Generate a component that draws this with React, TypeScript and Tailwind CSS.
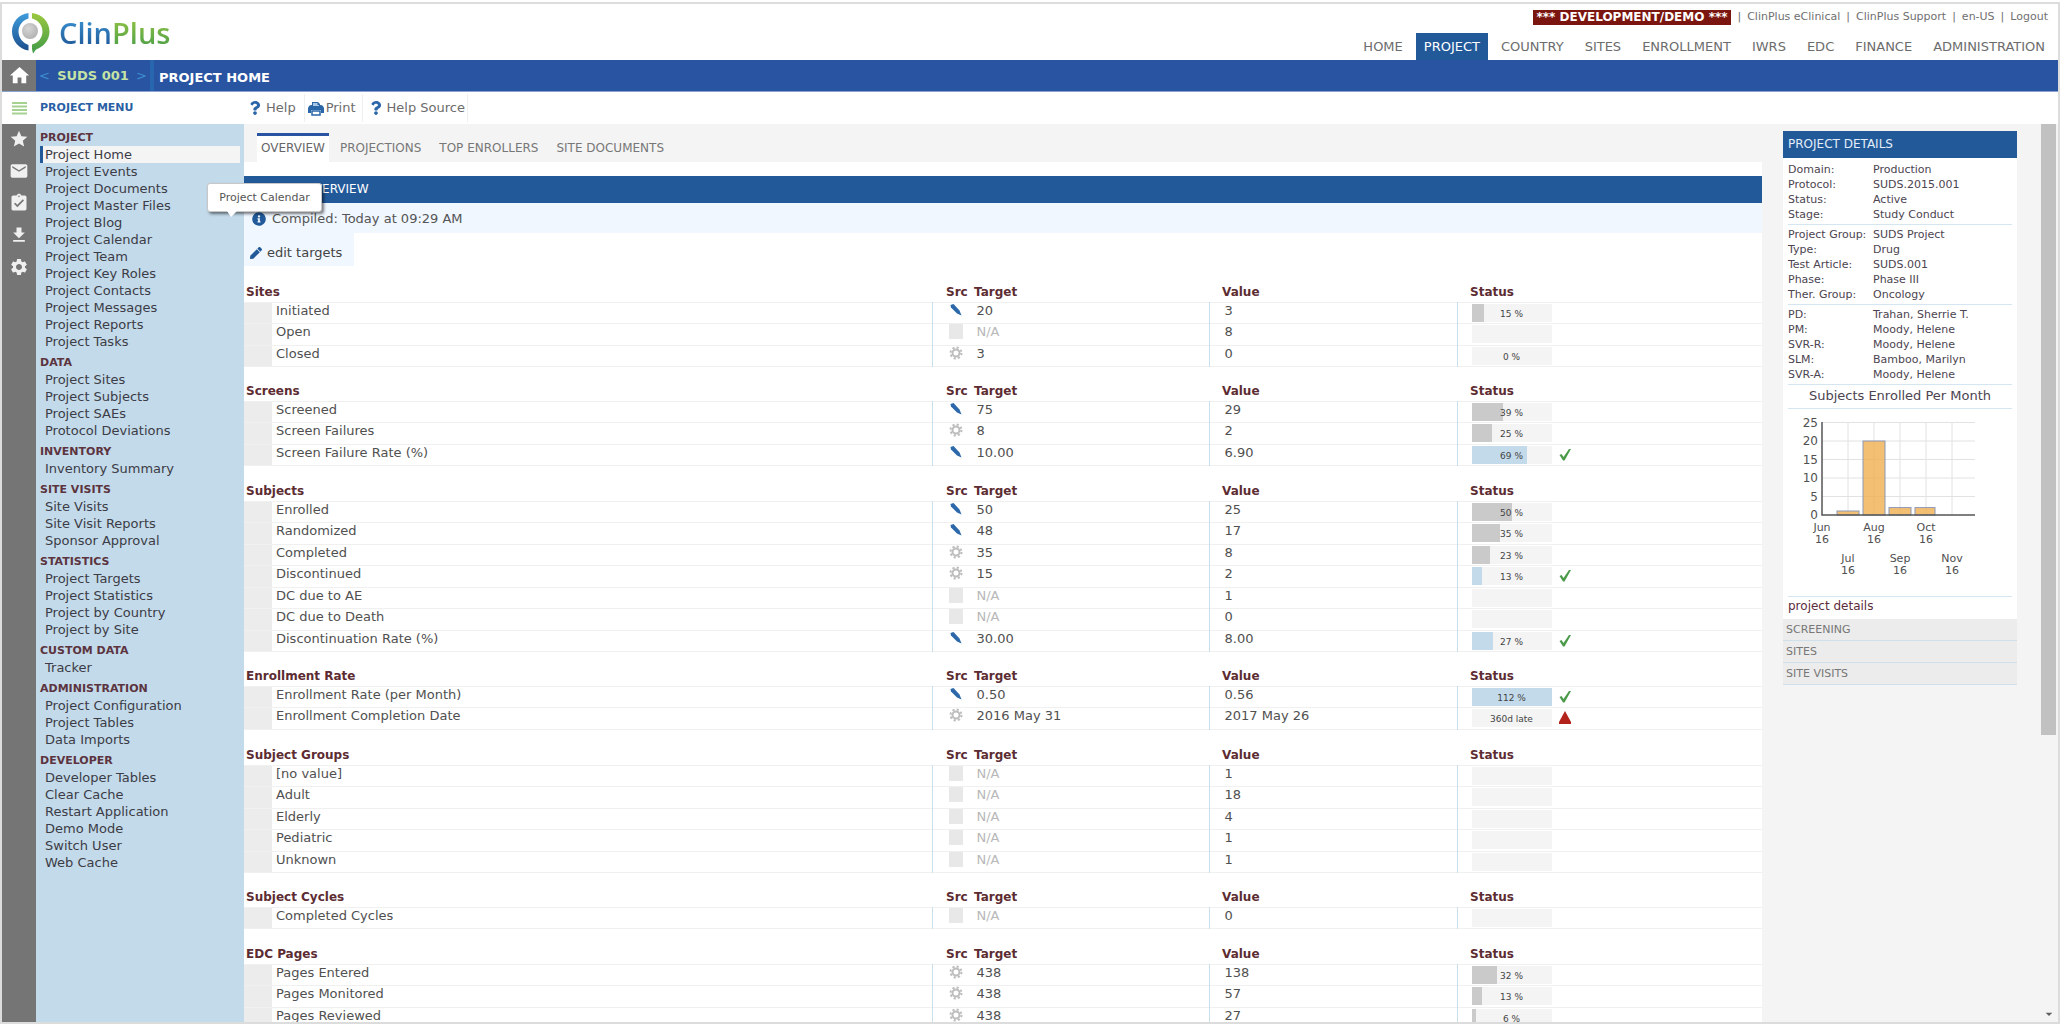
import { FaInfoCircle, FaPen, FaQuestion } from 'react-icons/fa';
import {
  MdArrowDropDown,
  MdAssignmentTurnedIn,
  MdDownload,
  MdEmail,
  MdHome,
  MdSettings,
  MdStar,
} from 'react-icons/md';

type Source = 'manual' | 'auto' | 'none';

interface Metric {
  name: string;
  src: Source;
  target: string;
  value: string;
  percent?: number;
  label?: string;
  good?: boolean;
  late?: boolean;
}

interface MetricGroup {
  title: string;
  rows: Metric[];
}

const NAV = ['HOME', 'PROJECT', 'COUNTRY', 'SITES', 'ENROLLMENT', 'IWRS', 'EDC', 'FINANCE', 'ADMINISTRATION'];

const TOP_LINKS = ['ClinPlus eClinical', 'ClinPlus Support', 'en-US', 'Logout'];

const TABS = ['OVERVIEW', 'PROJECTIONS', 'TOP ENROLLERS', 'SITE DOCUMENTS'];

const MENU = [
  {
    title: 'PROJECT',
    items: [
      'Project Home',
      'Project Events',
      'Project Documents',
      'Project Master Files',
      'Project Blog',
      'Project Calendar',
      'Project Team',
      'Project Key Roles',
      'Project Contacts',
      'Project Messages',
      'Project Reports',
      'Project Tasks',
    ],
  },
  { title: 'DATA', items: ['Project Sites', 'Project Subjects', 'Project SAEs', 'Protocol Deviations'] },
  { title: 'INVENTORY', items: ['Inventory Summary'] },
  { title: 'SITE VISITS', items: ['Site Visits', 'Site Visit Reports', 'Sponsor Approval'] },
  { title: 'STATISTICS', items: ['Project Targets', 'Project Statistics', 'Project by Country', 'Project by Site'] },
  { title: 'CUSTOM DATA', items: ['Tracker'] },
  { title: 'ADMINISTRATION', items: ['Project Configuration', 'Project Tables', 'Data Imports'] },
  {
    title: 'DEVELOPER',
    items: ['Developer Tables', 'Clear Cache', 'Restart Application', 'Demo Mode', 'Switch User', 'Web Cache'],
  },
];

const GROUPS: MetricGroup[] = [
  {
    title: 'Sites',
    rows: [
      { name: 'Initiated', src: 'manual', target: '20', value: '3', percent: 15 },
      { name: 'Open', src: 'none', target: 'N/A', value: '8' },
      { name: 'Closed', src: 'auto', target: '3', value: '0', percent: 0 },
    ],
  },
  {
    title: 'Screens',
    rows: [
      { name: 'Screened', src: 'manual', target: '75', value: '29', percent: 39 },
      { name: 'Screen Failures', src: 'auto', target: '8', value: '2', percent: 25 },
      { name: 'Screen Failure Rate (%)', src: 'manual', target: '10.00', value: '6.90', percent: 69, good: true },
    ],
  },
  {
    title: 'Subjects',
    rows: [
      { name: 'Enrolled', src: 'manual', target: '50', value: '25', percent: 50 },
      { name: 'Randomized', src: 'manual', target: '48', value: '17', percent: 35 },
      { name: 'Completed', src: 'auto', target: '35', value: '8', percent: 23 },
      { name: 'Discontinued', src: 'auto', target: '15', value: '2', percent: 13, good: true },
      { name: 'DC due to AE', src: 'none', target: 'N/A', value: '1' },
      { name: 'DC due to Death', src: 'none', target: 'N/A', value: '0' },
      { name: 'Discontinuation Rate (%)', src: 'manual', target: '30.00', value: '8.00', percent: 27, good: true },
    ],
  },
  {
    title: 'Enrollment Rate',
    rows: [
      { name: 'Enrollment Rate (per Month)', src: 'manual', target: '0.50', value: '0.56', percent: 112, good: true },
      {
        name: 'Enrollment Completion Date',
        src: 'auto',
        target: '2016 May 31',
        value: '2017 May 26',
        label: '360d late',
        late: true,
      },
    ],
  },
  {
    title: 'Subject Groups',
    rows: [
      { name: '[no value]', src: 'none', target: 'N/A', value: '1' },
      { name: 'Adult', src: 'none', target: 'N/A', value: '18' },
      { name: 'Elderly', src: 'none', target: 'N/A', value: '4' },
      { name: 'Pediatric', src: 'none', target: 'N/A', value: '1' },
      { name: 'Unknown', src: 'none', target: 'N/A', value: '1' },
    ],
  },
  {
    title: 'Subject Cycles',
    rows: [{ name: 'Completed Cycles', src: 'none', target: 'N/A', value: '0' }],
  },
  {
    title: 'EDC Pages',
    rows: [
      { name: 'Pages Entered', src: 'auto', target: '438', value: '138', percent: 32 },
      { name: 'Pages Monitored', src: 'auto', target: '438', value: '57', percent: 13 },
      { name: 'Pages Reviewed', src: 'auto', target: '438', value: '27', percent: 6 },
    ],
  },
];

const DETAILS = [
  [
    ['Domain:', 'Production'],
    ['Protocol:', 'SUDS.2015.001'],
    ['Status:', 'Active'],
    ['Stage:', 'Study Conduct'],
  ],
  [
    ['Project Group:', 'SUDS Project'],
    ['Type:', 'Drug'],
    ['Test Article:', 'SUDS.001'],
    ['Phase:', 'Phase III'],
    ['Ther. Group:', 'Oncology'],
  ],
  [
    ['PD:', 'Trahan, Sherrie T.'],
    ['PM:', 'Moody, Helene'],
    ['SVR-R:', 'Moody, Helene'],
    ['SLM:', 'Bamboo, Marilyn'],
    ['SVR-A:', 'Moody, Helene'],
  ],
];

const ENROLLED = [
  { month: 'Jun', count: 0 },
  { month: 'Jul', count: 1 },
  { month: 'Aug', count: 20 },
  { month: 'Sep', count: 2 },
  { month: 'Oct', count: 2 },
  { month: 'Nov', count: 0 },
];

function Logo() {
  return (
    <a href="#" className="flex items-center gap-2" aria-label="ClinPlus">
      <svg width="40" height="42" viewBox="0 0 40 42">
        <defs>
          <linearGradient id="logo-blue" x1="0" y1="0" x2="0" y2="1">
            <stop offset="0" stopColor="#3f9ddc" />
            <stop offset="1" stopColor="#1d4f8e" />
          </linearGradient>
          <linearGradient id="logo-green" x1="0" y1="0" x2="0" y2="1">
            <stop offset="0" stopColor="#9cc93f" />
            <stop offset="1" stopColor="#3f9a48" />
          </linearGradient>
          <radialGradient id="logo-ball" cx="0.4" cy="0.35" r="0.7">
            <stop offset="0" stopColor="#d6d6d6" />
            <stop offset="1" stopColor="#b0b0b0" />
          </radialGradient>
        </defs>
        <path
          fill="url(#logo-blue)"
          d="M17.500 1C8 2 1 10 1 19.500C1 29 8 37 17.500 38.500V33C12 31 7.500 26 7.500 19.500C7.500 13 12 8 17.500 6.500Z"
        />
        <path
          fill="url(#logo-green)"
          d="M21 1C31 2 38.500 10 38.500 19.500C38.500 28 32.500 35 25 37.500L22 41.500L21 37V32.500C27 31 31.500 26 31.500 19.500C31.500 13 27 8 21 6.500Z"
        />
        <circle cx="19" cy="19" r="8" fill="url(#logo-ball)" />
      </svg>
      <span className="pb-px font-['Open_Sans','Noto_Sans',sans-serif] text-[29px] leading-8 font-semibold">
        <span className="bg-linear-to-b from-[#3f9ddc] to-[#1d4f8e] bg-clip-text text-transparent">Clin</span>
        <span className="bg-linear-to-b from-[#9cc93f] to-[#3f9a48] bg-clip-text text-transparent">Plus</span>
      </span>
    </a>
  );
}

function Header() {
  return (
    <header className="flex h-14 shrink-0 justify-between bg-white">
      <div className="pt-2 pl-[9px]">
        <Logo />
      </div>
      <div className="flex flex-col items-end justify-between">
        <div className="mt-[5px] mr-[10px] flex h-4 items-center gap-[6px] text-[11px] text-[#707070]">
          <strong className="bg-[#7b150f] px-1 text-[12px] leading-[15px] text-white">
            *** DEVELOPMENT/DEMO ***
          </strong>
          {TOP_LINKS.map((link) => (
            <span key={link} className="flex gap-[6px]">
              <span>|</span>
              <a href="#">{link}</a>
            </span>
          ))}
        </div>
        <nav className="mr-[5px] flex gap-[5px] text-[13px] text-[#6c6c6c]">
          {NAV.map((item) => (
            <a
              key={item}
              href="#"
              className={`px-2 pt-px leading-[26px] ${item === 'PROJECT' ? 'bg-[#225999] text-white' : ''}`}
            >
              {item}
            </a>
          ))}
        </nav>
      </div>
    </header>
  );
}

function TitleBar() {
  return (
    <div className="flex h-8 shrink-0 border-b border-[#8ba4cf] bg-[#2954a1] text-[13px] font-bold">
      <button aria-label="Home" className="flex w-[34px] items-center justify-center bg-[#757575] text-white">
        <MdHome size={23} />
      </button>
      <div className="flex w-[118px] items-center justify-between border-r-4 border-[#2866b0] px-[3px] text-[#c5e3a4]">
        <button aria-label="Previous project" className="font-normal text-[#3f8fd2]">&lt;</button>
        <a href="#">SUDS 001</a>
        <button aria-label="Next project" className="font-normal text-[#3f8fd2]">&gt;</button>
      </div>
      <h1 className="flex items-center pt-1 pl-[5px] text-white">PROJECT HOME</h1>
    </div>
  );
}

function PrinterIcon() {
  return (
    <svg width="16" height="15" viewBox="0 0 16 15">
      <path d="M4 4V1H10L12 3V4H13C15 4.500 16 6 16 8V12H13V9H3V12H0V8C0 6 1 4.500 3 4Z" fill="#2a66a8" />
      <path d="M5 5V2H9.500V4H11V5Z" fill="#a9c6e2" />
      <path d="M4 10H12V14H4Z" fill="#fff" stroke="#2a66a8" strokeWidth="1.500" />
    </svg>
  );
}

function Toolbar() {
  return (
    <div className="flex h-8 shrink-0 items-center bg-white text-[13px] text-[#6c6c6c]">
      <button aria-label="Toggle menu" className="flex w-[34px] justify-center">
        <svg width="15" height="13" viewBox="0 0 15 13" fill="#a5d191">
          <rect width="15" height="2" />
          <rect y="3.500" width="15" height="2" />
          <rect y="7" width="15" height="2" />
          <rect y="10.500" width="15" height="2" />
        </svg>
      </button>
      <div className="w-[208px] pt-px pl-1 text-[11px] font-bold text-[#2a5fa5]">PROJECT MENU</div>
      <button className="flex h-7 items-center gap-1 border-r border-[#efefef] pr-2 pl-1">
        <FaQuestion size={14} className="text-[#2a66a8]" />
        Help
      </button>
      <button className="flex h-7 items-center gap-[2px] border-r border-[#efefef] pr-[6px] pl-[3px]">
        <PrinterIcon />
        Print
      </button>
      <button className="flex h-7 items-center gap-1 border-r border-[#efefef] pr-[2px] pl-[6px]">
        <FaQuestion size={14} className="text-[#2a66a8]" />
        Help Source
      </button>
    </div>
  );
}

function IconRail() {
  return (
    <div className="flex w-[34px] shrink-0 flex-col items-center gap-3 bg-[#757575] pt-[5px] text-[#f0f0f0]">
      <button aria-label="Favorites"><MdStar size={20} /></button>
      <button aria-label="Messages"><MdEmail size={20} /></button>
      <button aria-label="Tasks"><MdAssignmentTurnedIn size={20} /></button>
      <button aria-label="Downloads"><MdDownload size={20} /></button>
      <button aria-label="Settings"><MdSettings size={20} /></button>
    </div>
  );
}

function Sidebar() {
  return (
    <nav className="relative w-[208px] shrink-0 bg-[#c3daea] px-1 pt-px text-[13px] leading-[17px] text-[#3c3c46]">
      {MENU.map((section) => (
        <section key={section.title}>
          <h2 className="pt-[5px] text-[11px] leading-4 font-bold text-[#5c3440]">{section.title}</h2>
          <ul>
            {section.items.map((item) => (
              <li key={item}>
                <a
                  href="#"
                  className={`block ${
                    item === 'Project Home' ? 'border-l-3 border-[#225999] bg-[#f4f4f4] pl-[2px]' : 'pl-[5px]'
                  }`}
                >
                  {item}
                </a>
              </li>
            ))}
          </ul>
        </section>
      ))}

      {/* Hover tooltip */}
      <div
        role="tooltip"
        className="absolute top-[59px] left-[171px] z-10 w-[115px] rounded-[3px] border border-[#c8c8c8] bg-white pt-px text-center text-[11px] leading-[26px] text-[#555] shadow-[2px_2px_3px_rgba(0,0,0,0.5)]"
      >
        Project Calendar
        <svg className="absolute top-full left-[19px]" width="10" height="6" viewBox="0 0 10 6">
          <path d="M0 0H10L4 6Z" fill="#fff" />
        </svg>
      </div>
    </nav>
  );
}

function SourceIcon({ src }: { src: Source }) {
  if (src === 'manual') {
    return (
      <svg width="14" height="14" viewBox="0 0 14 14">
        <path d="M1.500 2L4.500 1L10.500 7.500L12.500 12.500L8 10.500L2 4.500Z" fill="#2c68aa" />
      </svg>
    );
  }
  if (src === 'auto') {
    return (
      <svg width="14" height="14" viewBox="0 0 14 14" fill="none" stroke="#bdbdbd">
        <circle cx="7" cy="7" r="3.500" strokeWidth="2" />
        <circle cx="7" cy="7" r="5.500" strokeWidth="2" strokeDasharray="2.160 2.160" />
      </svg>
    );
  }
  return <span className="block h-[15px] w-[14px] bg-[#e8e8e8]" />;
}

function StatusBar({ row }: { row: Metric }) {
  const text = row.label ?? (row.percent === undefined ? '' : `${row.percent} %`);
  return (
    <div className="flex items-center gap-[7px]">
      <div className="relative h-[18px] w-20 bg-[#f4f4f4]">
        <div
          className={`h-full ${row.good ? 'bg-[#c3daea]' : 'bg-[#cacaca]'}`}
          style={{ width: `${Math.min(row.percent ?? 0, 100)}%` }}
        />
        <span className="absolute inset-0 text-center text-[9px] leading-5 text-[#444]">{text}</span>
      </div>
      {row.good && (
        <svg width="12" height="13" viewBox="0 0 12 13">
          <path d="M0.500 7L2.500 6L4.500 9L10 1H12L5.500 12.500H4Z" fill="#4a9a4a" />
        </svg>
      )}
      {row.late && (
        <svg width="12" height="13" viewBox="0 0 12 13">
          <path d="M6 0L12 11V13H0V11Z" fill="#b3231c" />
        </svg>
      )}
    </div>
  );
}

function MetricsTable() {
  return (
    <table className="w-full table-fixed border-collapse text-left text-[13px] leading-4 text-[#505050]">
      <colgroup>
        <col className="w-7" />
        <col />
        <col className="w-[277px]" />
        <col className="w-[248px]" />
        <col className="w-[305px]" />
      </colgroup>
      {GROUPS.map((group) => (
        <tbody key={group.title} className="group">
          <tr className="h-[35px] border-b border-[#f0f0f0] align-bottom text-[12px] text-[#5c2c32] group-even:h-9">
            <th colSpan={2} className="pb-[2px] pl-[2px]">{group.title}</th>
            <th className="pb-[2px] pl-[14px]">
              <span className="inline-block w-7">Src</span>Target
            </th>
            <th className="pb-[2px] pl-[13px]">Value</th>
            <th className="pb-[2px] pl-[13px]">Status</th>
          </tr>
          {group.rows.map((row) => (
            <tr key={row.name} className="h-[21px] border-b border-[#f0f0f0] align-top odd:h-[22px]">
              <td className="bg-[#ececec]" />
              <td className="pl-1">{row.name}</td>
              <td className="border-l border-[#c9dfee] pl-4">
                <div className="flex items-start gap-[14px]">
                  <SourceIcon src={row.src} />
                  <span className={row.src === 'none' ? 'text-[#b8b8b8]' : ''}>{row.target}</span>
                </div>
              </td>
              <td className="border-l border-[#c9dfee] pl-[15px]">{row.value}</td>
              <td className="border-l border-[#c9dfee] pt-px pl-[14px]">
                <StatusBar row={row} />
              </td>
            </tr>
          ))}
        </tbody>
      ))}
    </table>
  );
}

function Overview() {
  return (
    <main className="min-w-0 flex-1 bg-white">
      <div className="flex h-[38px] items-end bg-[#f4f4f4] pl-[13px] text-[12px] text-[#777]">
        {TABS.map((tab) => (
          <button
            key={tab}
            className={`h-[29px] ${
              tab === 'OVERVIEW' ? 'mr-[2px] border-t-3 border-[#2954a1] bg-white px-1 pb-[2px] text-[#666]' : 'px-[9px]'
            }`}
          >
            {tab}
          </button>
        ))}
      </div>
      <h2 className="mt-[14px] bg-[#225999] pl-[5px] text-[12px] leading-[27px] text-white">PROJECT OVERVIEW</h2>
      <p className="flex h-[30px] items-center gap-[6px] bg-[#f0f7ff] pt-px pl-2 text-[13px] text-[#555]">
        <FaInfoCircle size={14} className="text-[#225999]" />
        Compiled: Today at 09:29 AM
      </p>
      <button className="flex h-[33px] items-center gap-[5px] bg-[#f0f7ff] pt-[6px] pr-3 pl-[6px] text-[13px] text-[#444]">
        <FaPen size={12} className="text-[#225999]" />
        edit targets
      </button>
      <MetricsTable />
    </main>
  );
}

function EnrollmentChart() {
  const left = 34;
  const bottom = 106;
  const step = 26;
  const unit = 3.7;
  return (
    <svg width="226" height="187" viewBox="0 0 226 187" className="text-[12px]" fill="#505050">
      {[5, 10, 15, 20, 25].map((n) => (
        <line key={n} x1={left} x2={left + 153} y1={bottom - n * unit} y2={bottom - n * unit} stroke="#e2e2e2" />
      ))}
      {[1, 2, 3, 4, 5].map((n) => (
        <line key={n} x1={left + n * step} x2={left + n * step} y1={bottom - 92} y2={bottom} stroke="#e2e2e2" />
      ))}
      {ENROLLED.map(({ month, count }, i) =>
        count > 0 ? (
          <rect
            key={month}
            x={left + i * step - 11}
            y={bottom - Math.max(count * unit, 4)}
            width={month === 'Oct' ? 20 : 22}
            height={Math.max(count * unit, 4)}
            fill="#f0b050"
            fillOpacity="0.8"
            stroke="#8c98b4"
          />
        ) : null,
      )}
      <path d={`M${left} ${bottom - 93}V${bottom}H${left + 153}`} fill="none" stroke="#555" strokeWidth="1.500" />
      {[0, 5, 10, 15, 20, 25].map((n) => (
        <text key={n} x={left - 4} y={bottom - n * unit + 4} textAnchor="end">
          {n}
        </text>
      ))}
      {ENROLLED.map(({ month }, i) => {
        const y = i % 2 === 0 ? 122 : 153;
        return (
          <g key={month} textAnchor="middle" className="text-[11px]">
            <text x={left + i * step} y={y}>{month}</text>
            <text x={left + i * step} y={y + 12}>16</text>
          </g>
        );
      })}
    </svg>
  );
}

function DetailsPanel() {
  return (
    <aside className="w-[279px] shrink-0 bg-[#f4f4f4] pt-[7px] pr-6 pl-[21px] text-[11px] leading-[15px] text-[#4c4450]">
      <h2 className="bg-[#225999] pl-[5px] text-[12px] leading-[27px] text-[#e4eef8]">PROJECT DETAILS</h2>
      <div className="bg-white px-[5px] pt-1">
        {DETAILS.map((block) => (
          <dl key={block[0][0]} className="mb-[2px] border-b border-[#d3e6f2] pb-[2px]">
            {block.map(([term, text]) => (
              <div key={term} className="flex">
                <dt className="w-[85px] shrink-0 whitespace-nowrap">{term}</dt>
                <dd>{text}</dd>
              </div>
            ))}
          </dl>
        ))}
        <h3 className="border-b border-[#d3e6f2] pb-1 text-center text-[13px] leading-[17px]">
          Subjects Enrolled Per Month
        </h3>
        <EnrollmentChart />
        <a href="#" className="block border-t border-[#d3e6f2] pb-1 text-[12px] leading-[18px] text-[#5c2c3c]">
          project details
        </a>
      </div>
      {['SCREENING', 'SITES', 'SITE VISITS'].map((title) => (
        <button
          key={title}
          className="block h-[22px] w-full border-b border-[#cfe0ec] bg-[#ececec] pl-[3px] text-left text-[#777]"
        >
          {title}
        </button>
      ))}
    </aside>
  );
}

function ScrollTrack() {
  return (
    <div className="flex w-[17px] shrink-0 flex-col justify-between bg-[#f4f4f4] pr-[2px]">
      <div className="h-[68%] bg-[#c1c1c1]" />
      <MdArrowDropDown size={16} className="text-[#606060]" />
    </div>
  );
}

export default function App() {
  return (
    <div className="h-screen bg-white pt-[2px] pr-[2px] pb-[6px] font-['DejaVu_Sans',Verdana,sans-serif]">
      <div className="flex h-full flex-col overflow-hidden border-2 border-[#dcdcdc]">
        <Header />
        <TitleBar />
        <Toolbar />
        <div className="flex min-h-0 flex-1">
          <IconRail />
          <Sidebar />
          <div className="flex min-w-0 flex-1 overflow-hidden">
            <Overview />
            <DetailsPanel />
          </div>
          <ScrollTrack />
        </div>
      </div>
    </div>
  );
}
